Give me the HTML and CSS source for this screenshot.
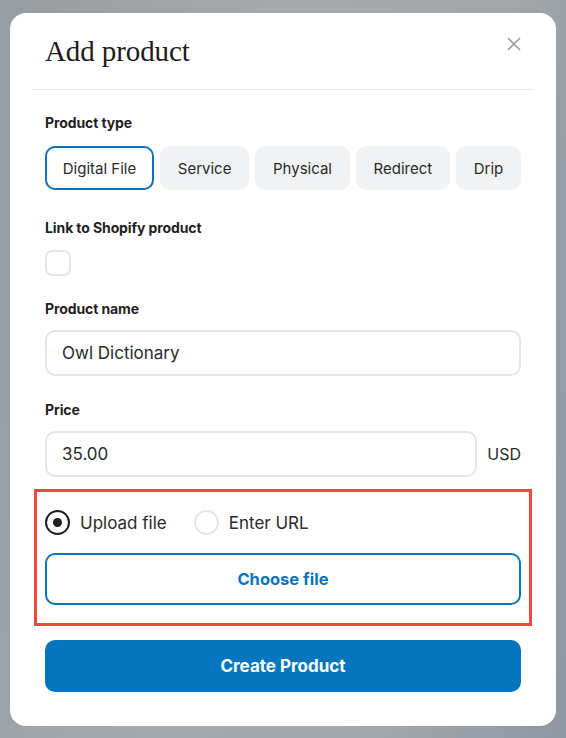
FILE: index.html
```html
<!DOCTYPE html>
<html>
<head>
<meta charset="utf-8">
<link rel="stylesheet" href="styles.css">
</head>
<body>
<div class="modal">
  <div class="header">
    <h1 class="title">Add product</h1>
    <button class="close" aria-label="Close">
      <svg width="14" height="14" viewBox="0 0 14 14"><path d="M1 1L13 13M13 1L1 13" stroke="#9b9b9b" stroke-width="1.6" fill="none"/></svg>
    </button>
  </div>
  <div class="body">
    <div class="field f-type">
      <div class="label">Product type</div>
      <div class="types">
        <div class="type selected">Digital File</div>
        <div class="type">Service</div>
        <div class="type">Physical</div>
        <div class="type">Redirect</div>
        <div class="type">Drip</div>
      </div>
    </div>
    <div class="field f-link">
      <div class="label">Link to Shopify product</div>
      <div class="checkbox"></div>
    </div>
    <div class="field f-name">
      <div class="label">Product name</div>
      <div class="input">Owl Dictionary</div>
    </div>
    <div class="field f-price">
      <div class="label">Price</div>
      <div class="price-row">
        <div class="input grow">35.00</div>
        <span class="currency">USD</span>
      </div>
    </div>
    <div class="highlight">
      <div class="radios">
        <label class="radio-opt"><span class="radio on"></span>Upload file</label>
        <label class="radio-opt"><span class="radio"></span>Enter URL</label>
      </div>
      <div class="choose">Choose file</div>
    </div>
    <div class="create">Create Product</div>
  </div>
</div>
</body>
</html>
```

FILE: styles.css
```css
* { box-sizing: border-box; }
html, body { margin: 0; padding: 0; }
body {
  width: 566px;
  height: 738px;
  overflow: hidden;
  background: linear-gradient(100deg, #959da3 0%, #a3abb0 40%, #a1a9af 70%, #8f989f 100%);
  font-family: "Inter", "Noto Sans", sans-serif;
  color: #1f1f1f;
}
.modal {
  margin: 13px 0 0 10px;
  width: 546px;
  height: 713px;
  background: #fff;
  border-radius: 16px;
  padding: 0 22px 34px;
}
.header {
  height: 77px;
  display: flex;
  justify-content: space-between;
  align-items: flex-start;
  padding: 21px 13px 0 13px;
  border-bottom: 1px solid #ececec;
}
.title {
  margin: 0;
  font-family: "Liberation Serif", "DejaVu Serif", serif;
  font-weight: 400;
  font-size: 29px;
  line-height: 34px;
  letter-spacing: -0.1px;
  color: #1c1c1c;
}
.close {
  border: 0;
  background: none;
  padding: 0;
  margin-top: 3px;
  width: 14px;
  height: 14px;
  display: flex;
}
.body {
  padding: 0 13px;
  display: flex;
  flex-direction: column;
}
.field { display: flex; flex-direction: column; }
.label {
  font-size: 14px;
  line-height: 20px;
  font-weight: 700;
  color: #1f1f1f;
  letter-spacing: -0.1px;
}
.f-type { margin-top: 23px; gap: 13px; }
.f-link { margin-top: 28px; gap: 12px; }
.f-name { margin-top: 23px; gap: 11px; }
.f-price { margin-top: 24px; gap: 11px; }
.types { display: flex; gap: 6px; }
.type {
  flex: 1 1 auto;
  height: 44px;
  padding: 0 14px;
  display: flex;
  align-items: center;
  justify-content: center;
  white-space: nowrap;
  background: #f1f2f4;
  border-radius: 10px;
  font-size: 15px;
  color: #2a2a2a;
  border: 2px solid #f1f2f4;
}
.type.selected {
  background: #fff;
  border-color: #0a74bd;
}
.checkbox {
  width: 26px;
  height: 26px;
  border: 2px solid #e6e6e6;
  border-radius: 7px;
}
.input {
  height: 46px;
  border: 2px solid #e6e6e6;
  border-radius: 10px;
  padding: 0 15px;
  display: flex;
  align-items: center;
  font-size: 17px;
  color: #2a2a2a;
}
.price-row { display: flex; align-items: center; gap: 10px; }
.grow { flex: 1; }
.currency { font-size: 16px; color: #2a2a2a; width: 34px; text-align: right; }
.highlight {
  margin: 12px -11px 0;
  border: 3px solid #f2473e;
  padding: 18px 8px 18px;
  display: flex;
  flex-direction: column;
  gap: 18px;
}
.radios { display: flex; gap: 27px; }
.radio-opt {
  display: flex;
  align-items: center;
  gap: 10px;
  font-size: 17px;
  color: #2a2a2a;
}
.radio {
  width: 25px;
  height: 25px;
  border-radius: 50%;
  border: 2px solid #e6e6e6;
  display: flex;
  align-items: center;
  justify-content: center;
}
.radio.on { border-color: #1f1f1f; }
.radio.on::after {
  content: "";
  width: 9px;
  height: 9px;
  border-radius: 50%;
  background: #1f1f1f;
}
.choose {
  height: 52px;
  border: 2px solid #0a74bd;
  border-radius: 10px;
  display: flex;
  align-items: center;
  justify-content: center;
  color: #0a74bd;
  font-weight: 700;
  font-size: 16.5px;
}
.create {
  margin-top: 14px;
  height: 52px;
  background: #0576be;
  border-radius: 10px;
  display: flex;
  align-items: center;
  justify-content: center;
  color: #fff;
  font-weight: 700;
  font-size: 17px;
}
```
